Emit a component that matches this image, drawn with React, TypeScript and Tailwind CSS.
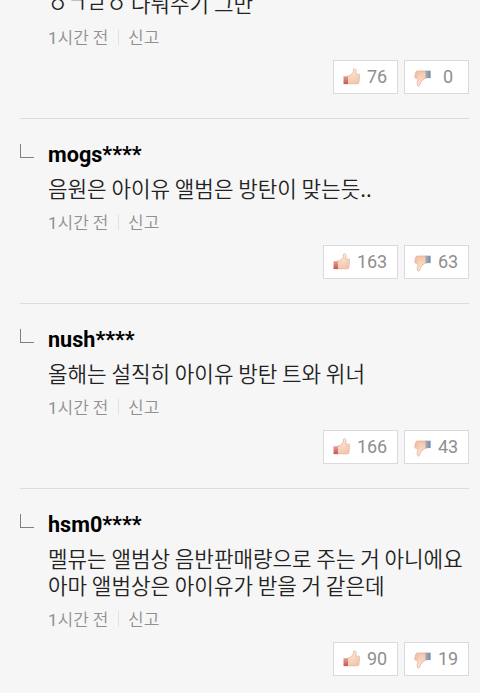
import React from "react";

type Comment = {
  user: string;
  lines: string[];
  up: number;
  down: number;
};

const comments: Comment[] = [
  { user: "", lines: ["ㅇㄱㄹㅇ 나눠주기 그만"], up: 76, down: 0 },
  { user: "mogs****", lines: ["음원은 아이유 앨범은 방탄이 맞는듯.."], up: 163, down: 63 },
  { user: "nush****", lines: ["올해는 설직히 아이유 방탄 트와 위너"], up: 166, down: 43 },
  {
    user: "hsm0****",
    lines: ["멜뮤는 앨범상 음반판매량으로 주는 거 아니에요", "아마 앨범상은 아이유가 받을 거 같은데"],
    up: 90,
    down: 19,
  },
];

function ThumbUp() {
  return (
    <svg width="17" height="17" viewBox="0 0 17 17" className="-mt-px shrink-0">
      <defs>
        <linearGradient id="cuff-up" x1="0" y1="0" x2="0" y2="1">
          <stop offset="0" stopColor="#e3a295" />
          <stop offset="1" stopColor="#c4574a" />
        </linearGradient>
        <linearGradient id="skin-up" x1="0" y1="0" x2="0" y2="1">
          <stop offset="0" stopColor="#fce9da" />
          <stop offset="1" stopColor="#f5c7ae" />
        </linearGradient>
      </defs>
      <path
        d="M4 8.4 7.6 7.2 10.4 4V1.4c.2-.9 1.9-.9 2.4.1.5 1.4.1 3.2-.4 4.6h3.2c.7 0 1.1.6 1 1.3l-.7 7c-.1 1-.7 1.4-1.5 1.4H4z"
        fill="url(#skin-up)"
        stroke="#dfac92"
        strokeWidth=".7"
      />
      <path d="M.5 8.2H5v7.9H.5z" fill="url(#cuff-up)" />
      <path d="M12.8 8.6h3M12.6 10.8h3M12.4 13h3" stroke="#e8b89e" strokeWidth=".5" />
    </svg>
  );
}

function ThumbDown() {
  return (
    <svg width="17" height="17" viewBox="0 0 17 17" className="mt-[3px] shrink-0">
      <defs>
        <linearGradient id="cuff-down" x1="0" y1="0" x2="1" y2="0">
          <stop offset="0" stopColor="#a9afbb" />
          <stop offset="1" stopColor="#7388a6" />
        </linearGradient>
        <linearGradient id="skin-down" x1="0" y1="0" x2="0" y2="1">
          <stop offset="0" stopColor="#f3c3a8" />
          <stop offset="1" stopColor="#fde6d6" />
        </linearGradient>
      </defs>
      <path
        d="M13 1H3.4c-.8 0-1.4.4-1.6 1.2L.7 6.8c-.1.9.3 1.4 1.1 1.4l1.6.6c.4.6.6 1 .3 1.8-.6 1.6-.6 3-.3 4.6.3 1.4 1.7 1.3 2.2.1l1-2.8L9.6 9 13 7.8z"
        fill="url(#skin-down)"
        stroke="#dfac92"
        strokeWidth=".7"
      />
      <path d="M11.4.7h5.2v7.4h-5.2z" fill="url(#cuff-down)" />
      <path d="M1.6 3.2h3M1.4 5h3M1.2 6.8h3" stroke="#e3b095" strokeWidth=".5" />
    </svg>
  );
}

function Vote({ count, down = false }: { count: number; down?: boolean }) {
  return (
    <button
      className={`flex h-[34px] items-center justify-between border border-[#dadada] bg-white pl-[9px] ${
        count >= 100 ? "w-[75px]" : "w-[65px]"
      } ${count < 10 ? "pr-[15px]" : "pr-[10px]"}`}
    >
      {down ? <ThumbDown /> : <ThumbUp />}
      <span className="-mt-px font-['Roboto',sans-serif] text-[18px] leading-[32px] tracking-[-0.1px] text-[#8e8e8e]">
        {count}
      </span>
    </button>
  );
}

function CommentItem({ comment }: { comment: Comment }) {
  return (
    <li className="flex border-t border-[#dcdcdc] pt-[23px] pb-[24px]">
      <span className="mt-[2px] mr-[14px] h-[14px] w-[14px] shrink-0 border-b border-l border-[#808080]" />
      <div className="min-w-0 flex-1">
        <p className="h-[26px] font-['Roboto',sans-serif] text-[21.6px] leading-[26px] font-bold text-black">
          {comment.user}
        </p>
        <div className="mt-[6px] text-[21.25px] leading-[27px] font-[350] whitespace-nowrap text-[#222]">
          {comment.lines.map((line) => (
            <p key={line} className="h-[27px]">
              {line}
            </p>
          ))}
        </div>
        <div className="mt-[10px] flex h-[22px] items-center text-[17px] leading-[22px] font-[350] text-[#909090]">
          <span className="w-[60px] whitespace-nowrap">
            <span className="font-['Roboto',sans-serif] font-normal">1</span>시간 전
          </span>
          <span className="mr-[9px] ml-[10px] h-[16px] w-px bg-[#e2e2e2]" />
          <span>신고</span>
        </div>
        <div className="mt-[12px] flex justify-end gap-[6px]">
          <Vote count={comment.up} />
          <Vote count={comment.down} down />
        </div>
      </div>
    </li>
  );
}

export default function App() {
  return (
    <main className="h-[693px] w-[480px] overflow-hidden bg-[#f6f6f6] font-['Noto_Sans_CJK_KR',sans-serif]">
      <ul className="-mt-[67px] pr-[11px] pl-[20px]">
        {comments.map((comment) => (
          <CommentItem key={comment.up} comment={comment} />
        ))}
      </ul>
    </main>
  );
}
